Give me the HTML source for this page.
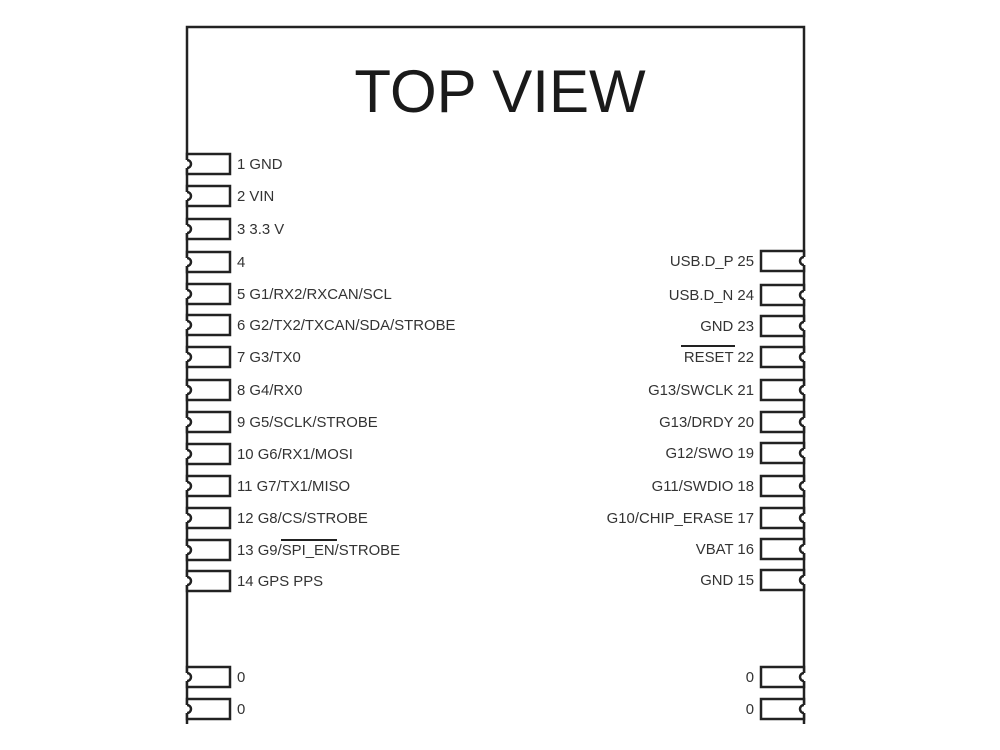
<!DOCTYPE html>
<html><head><meta charset="utf-8"><style>
html,body{margin:0;padding:0;background:#fff;width:1000px;height:750px;overflow:hidden}
svg text{font-family:"Liberation Sans",Arial,sans-serif;fill:#333;font-size:14.9px}
</style></head><body>
<svg width="1000" height="750" viewBox="0 0 1000 750" xmlns="http://www.w3.org/2000/svg">
<defs>
<g id="L">
<rect x="0" y="-10" width="43" height="20" fill="#fff" stroke="#222" stroke-width="2.5"/>
<line x1="0" y1="-4" x2="0" y2="4" stroke="#fff" stroke-width="5"/>
<path d="M0,-4 A4,4 0 0 1 0,4" fill="none" stroke="#222" stroke-width="2.5"/>
</g>
</defs>
<path d="M187,724 V27 H804 V724" fill="none" stroke="#222" stroke-width="2.5"/>
<text x="500" y="112" text-anchor="middle" style="font-size:60px;fill:#1a1a1a">TOP VIEW</text>

<use href="#L" transform="translate(187,164)"/>
<use href="#L" transform="translate(187,196)"/>
<use href="#L" transform="translate(187,229)"/>
<use href="#L" transform="translate(187,262)"/>
<use href="#L" transform="translate(187,294)"/>
<use href="#L" transform="translate(187,325)"/>
<use href="#L" transform="translate(187,357)"/>
<use href="#L" transform="translate(187,390)"/>
<use href="#L" transform="translate(187,422)"/>
<use href="#L" transform="translate(187,454)"/>
<use href="#L" transform="translate(187,486)"/>
<use href="#L" transform="translate(187,518)"/>
<use href="#L" transform="translate(187,550)"/>
<use href="#L" transform="translate(187,581)"/>
<use href="#L" transform="translate(187,677)"/>
<use href="#L" transform="translate(187,709)"/>

<g transform="translate(804,0) scale(-1,1)">
<use href="#L" transform="translate(0,261)"/>
<use href="#L" transform="translate(0,295)"/>
<use href="#L" transform="translate(0,326)"/>
<use href="#L" transform="translate(0,357)"/>
<use href="#L" transform="translate(0,390)"/>
<use href="#L" transform="translate(0,422)"/>
<use href="#L" transform="translate(0,453)"/>
<use href="#L" transform="translate(0,486)"/>
<use href="#L" transform="translate(0,518)"/>
<use href="#L" transform="translate(0,549)"/>
<use href="#L" transform="translate(0,580)"/>
<use href="#L" transform="translate(0,677)"/>
<use href="#L" transform="translate(0,709)"/>
</g>

<g>
<text x="237" y="169">1 GND</text>
<text x="237" y="201">2 VIN</text>
<text x="237" y="234">3 3.3 V</text>
<text x="237" y="267">4</text>
<text x="237" y="299">5 G1/RX2/RXCAN/SCL</text>
<text x="237" y="330">6 G2/TX2/TXCAN/SDA/STROBE</text>
<text x="237" y="362">7 G3/TX0</text>
<text x="237" y="395">8 G4/RX0</text>
<text x="237" y="427">9 G5/SCLK/STROBE</text>
<text x="237" y="459">10 G6/RX1/MOSI</text>
<text x="237" y="491">11 G7/TX1/MISO</text>
<text x="237" y="523">12 G8/CS/STROBE</text>
<text x="237" y="555">13 G9/SPI_EN/STROBE</text>
<text x="237" y="586">14 GPS PPS</text>
<text x="237" y="682">0</text>
<text x="237" y="714">0</text>
</g>
<line x1="281" y1="540" x2="337" y2="540" stroke="#222" stroke-width="2"/>

<g text-anchor="end">
<text x="754" y="266">USB.D_P 25</text>
<text x="754" y="300">USB.D_N 24</text>
<text x="754" y="331">GND 23</text>
<text x="754" y="362">RESET 22</text>
<text x="754" y="395">G13/SWCLK 21</text>
<text x="754" y="427">G13/DRDY 20</text>
<text x="754" y="458">G12/SWO 19</text>
<text x="754" y="491">G11/SWDIO 18</text>
<text x="754" y="523">G10/CHIP_ERASE 17</text>
<text x="754" y="554">VBAT 16</text>
<text x="754" y="585">GND 15</text>
<text x="754" y="682">0</text>
<text x="754" y="714">0</text>
</g>
<line x1="681" y1="346" x2="735" y2="346" stroke="#222" stroke-width="2"/>
</svg>
</body></html>
